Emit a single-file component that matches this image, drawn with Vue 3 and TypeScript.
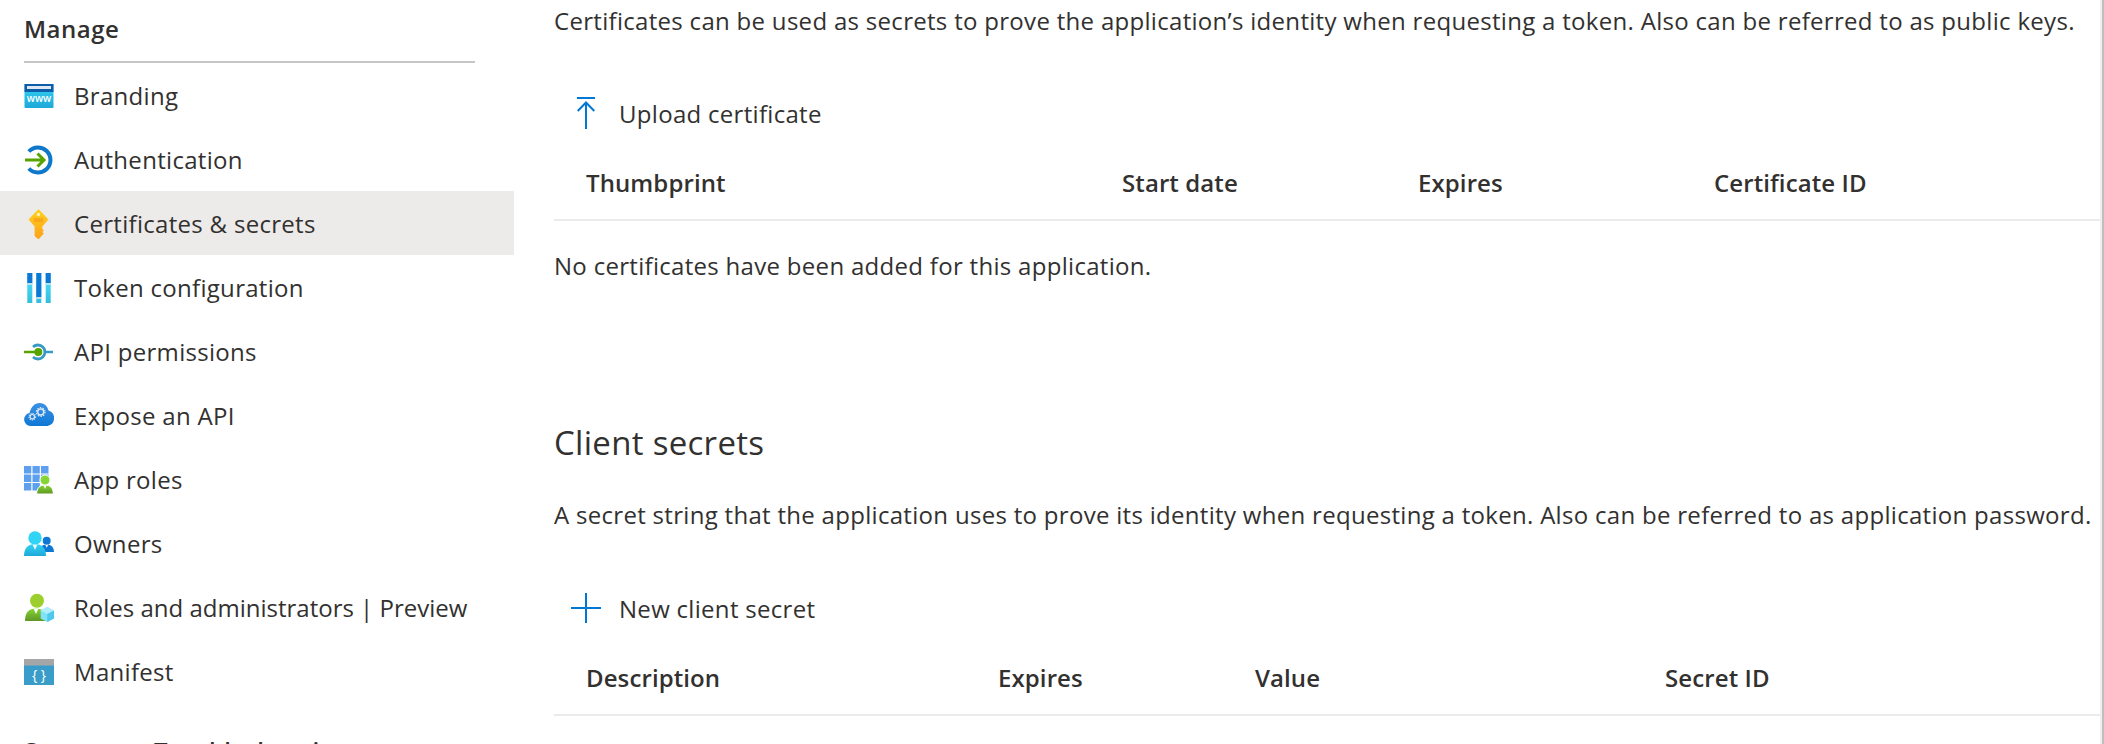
<script setup lang="ts">
const navItems = [
  { key: 'branding', label: 'Branding' },
  { key: 'auth', label: 'Authentication' },
  { key: 'certs', label: 'Certificates & secrets', active: true },
  { key: 'token', label: 'Token configuration' },
  { key: 'api', label: 'API permissions' },
  { key: 'expose', label: 'Expose an API' },
  { key: 'roles', label: 'App roles' },
  { key: 'owners', label: 'Owners' },
  { key: 'admins', label: 'Roles and administrators | Preview', tight: true },
  { key: 'manifest', label: 'Manifest' },
];

const certColumns = ['Thumbprint', 'Start date', 'Expires', 'Certificate ID'];
const secretColumns = ['Description', 'Expires', 'Value', 'Secret ID'];
</script>

<template>
  <div class="page">
    <aside class="sidebar">
      <h3 class="group-title">Manage</h3>
      <nav class="nav">
        <a
          v-for="item in navItems"
          :key="item.key"
          class="nav-item"
          :class="{ active: item.active }"
        >
          <span class="nav-icon">
            <svg width="30" height="30" viewBox="0 0 30 30">
              <defs>
                <linearGradient id="g-cyan" x1="0" y1="0" x2="0" y2="1">
                  <stop offset="0" stop-color="#32d4f5" />
                  <stop offset="1" stop-color="#1fa8d8" />
                </linearGradient>
                <linearGradient id="g-green" x1="0" y1="0" x2="0" y2="1">
                  <stop offset="0" stop-color="#86d633" />
                  <stop offset="1" stop-color="#5e9624" />
                </linearGradient>
                <linearGradient id="g-cloud" x1="0" y1="0" x2="0" y2="1">
                  <stop offset="0" stop-color="#3c91e5" />
                  <stop offset="1" stop-color="#0f78d4" />
                </linearGradient>
                <linearGradient id="g-key" x1="0" y1="0" x2="0" y2="1">
                  <stop offset="0" stop-color="#fed11a" />
                  <stop offset="1" stop-color="#fea11b" />
                </linearGradient>
                <linearGradient id="g-bar" x1="0" y1="0" x2="0" y2="1">
                  <stop offset="0" stop-color="#50e6ff" />
                  <stop offset="1" stop-color="#32bedd" />
                </linearGradient>
              </defs>
              <template v-if="item.key === 'branding'">
                <rect x="0.500" y="3" width="29" height="24" rx="1" fill="url(#g-cyan)" />
                <rect x="0.500" y="3" width="29" height="8" fill="#0f5ca8" />
                <rect x="3" y="5" width="24" height="3" fill="#dce9f4" />
                <text x="15" y="21" class="www">www</text>
              </template>
              <template v-else-if="item.key === 'auth'">
                <path d="M4.800 6.500A12.500 12.500 0 1 1 4.800 23.500" fill="none" stroke="#0f78c8" stroke-width="4" />
                <path d="M1 15h18M13.500 8.500l6.500 6.500-6.500 6.500" fill="none" stroke="#57a300" stroke-width="3" />
              </template>
              <template v-else-if="item.key === 'certs'">
                <path d="M14.500 0.500L24 10.500 18 17.500V20l1.500 1.500L18 23l1.500 1.500L18 26l-3.500 4L11 27V17.500L5 10.500z" fill="url(#g-key)" stroke="url(#g-key)" stroke-width="0.800" stroke-linejoin="round" />
                <circle cx="14.500" cy="5.500" r="1.700" fill="#fff3c4" />
                <path d="M10 10h9M10 12h9" stroke="#f78d1e" stroke-width="1" />
              </template>
              <template v-else-if="item.key === 'token'">
                <rect x="3.300" y="0" width="5" height="30" fill="url(#g-bar)" />
                <rect x="12.300" y="0" width="5" height="30" fill="url(#g-bar)" />
                <rect x="21.700" y="0" width="5" height="30" fill="url(#g-bar)" />
                <rect x="3.300" y="0" width="5" height="10" fill="#0f78d4" />
                <rect x="12.300" y="0" width="5" height="24" fill="#0f78d4" />
                <rect x="21.700" y="0" width="5" height="10" fill="#0f78d4" />
                <path d="M3.300 11h5M12.300 25h5M21.700 11h5" stroke="#dce6ec" stroke-width="1.500" />
              </template>
              <template v-else-if="item.key === 'api'">
                <path d="M9 10A7 7 0 1 1 9 20" fill="none" stroke="#3999c6" stroke-width="2.800" />
                <path d="M20.500 15H29" stroke="#3999c6" stroke-width="2.500" />
                <path d="M0 15h14" stroke="#57a300" stroke-width="2.500" />
                <circle cx="14.300" cy="15" r="4" fill="#57a300" />
              </template>
              <template v-else-if="item.key === 'expose'">
                <path d="M6.500 25a6.500 6.500 0 0 1-1-12.900C6.800 6 10.800 2 15.500 2c4.700 0 8 3 9 7.500A8 8 0 0 1 23.500 25z" fill="url(#g-cloud)" />
                <circle cx="16.700" cy="11" r="3" fill="none" stroke="#dbe9f7" stroke-width="1.400" />
                <circle cx="16.700" cy="11" r="4.300" fill="none" stroke="#dbe9f7" stroke-width="1.300" stroke-dasharray="1.400 1.300" />
                <circle cx="8.300" cy="15.700" r="2.200" fill="none" stroke="#dbe9f7" stroke-width="1.200" />
                <circle cx="8.300" cy="15.700" r="3.300" fill="none" stroke="#dbe9f7" stroke-width="1.100" stroke-dasharray="1.200 1" />
              </template>
              <template v-else-if="item.key === 'roles'">
                <path d="M0 1h7.300v7.500H0zM8.500 1h7.300v7.500H8.500zM17 1h7.500v7.500H17zM0 9.500h7.300V17H0zM8.500 9.500h7.300V17H8.500zM17 9.500h7.500V17H17zM0 18h7.300v7.500H0zM8.500 18h7.300v7.500H8.500z" fill="#5ea0ef" />
                <path d="M12.700 29c0-6 3-9 8.300-9s8.300 3 8.300 9z" fill="url(#g-green)" stroke="#fff" stroke-width="1" />
                <circle cx="21" cy="15" r="5" fill="#86d633" stroke="#fff" stroke-width="1" />
                <path d="M19.500 20.500h3l-1.500 3.500z" fill="#fff" />
              </template>
              <template v-else-if="item.key === 'owners'">
                <circle cx="22.700" cy="11.700" r="4" fill="#0f78d4" />
                <path d="M15 23c0-4.500 3-7.500 7.700-7.500S30 18.500 30 23z" fill="#0f78d4" />
                <path d="M21.200 15.800h3l-1.500 3z" fill="#fff" />
                <circle cx="11" cy="9" r="6.700" fill="#32d4f5" />
                <path d="M0 27c0-8 4-12 11-12s11 4 11 12z" fill="url(#g-cyan)" />
                <path d="M8.500 15.500h5L11 21z" fill="#e8f8fd" />
              </template>
              <template v-else-if="item.key === 'admins'">
                <circle cx="13" cy="7.700" r="7" fill="#9ccf2e" />
                <path d="M1 28c0-9 4-12.500 11-12.500S22.700 19 22.700 28z" fill="url(#g-green)" />
                <path d="M9.500 15.500h5L12 21z" fill="#fff" />
                <path d="M23.300 14l6.700 3.500v8l-6.700 3.500-6.600-3.500v-8z" fill="#7fe3f7" />
                <path d="M16.700 17.500l6.600 3.500 6.700-3.500-6.700-3.500z" fill="#b4eefb" />
                <path d="M23.300 21v8l6.700-3.500v-8z" fill="#50c8ec" />
              </template>
              <template v-else-if="item.key === 'manifest'">
                <rect x="0" y="2" width="30" height="26" fill="#3a9cc9" />
                <rect x="0" y="2" width="30" height="6.500" fill="#a4a6a8" />
                <text x="15" y="22.500" class="braces">{ }</text>
              </template>
            </svg>
          </span>
          <span class="nav-label" :class="{ tight: item.tight }">{{ item.label }}</span>
        </a>
      </nav>
      <h3 class="group-title next">Support + Troubleshooting</h3>
    </aside>

    <main class="content">
      <p class="hint first">
        Certificates can be used as secrets to prove the application’s identity when requesting a token. Also can be referred to as public keys.
      </p>
      <button class="command">
        <span class="cmd-box">
          <svg width="18" height="32" viewBox="0 0 18 32">
            <path d="M0 1h18M9 6v26M0.700 14L9 5.500 17.300 14" fill="none" stroke="#0078d4" stroke-width="2" />
          </svg>
        </span>
        Upload certificate
      </button>
      <div class="table-head certs">
        <span v-for="col in certColumns" :key="col">{{ col }}</span>
      </div>
      <p class="empty">No certificates have been added for this application.</p>

      <h2 class="section-title">Client secrets</h2>
      <p class="hint">
        A secret string that the application uses to prove its identity when requesting a token. Also can be referred to as application password.
      </p>
      <button class="command">
        <span class="cmd-box">
          <svg width="30" height="30" viewBox="0 0 30 30">
            <path d="M0 15h30M15 0v30" fill="none" stroke="#0078d4" stroke-width="2" />
          </svg>
        </span>
        New client secret
      </button>
      <div class="table-head secrets">
        <span v-for="col in secretColumns" :key="col">{{ col }}</span>
      </div>
    </main>
  </div>
</template>

<style>
html,
body {
  margin: 0;
  background: #fff;
}
</style>

<style scoped>
.page {
  display: grid;
  grid-template-columns: 514px 1fr;
  box-sizing: border-box;
  height: 744px;
  overflow: hidden;
  border-right: 2px solid #bebebe;
  font-family: "Open Sans", "Noto Sans", sans-serif;
  font-size: 24px;
  letter-spacing: 0.3px;
  color: #323130;
}

.group-title {
  margin: 0 39px 0 24px;
  height: 63px;
  box-sizing: border-box;
  padding-top: 12px;
  line-height: 34px;
  font-size: 24px;
  font-weight: 600;
  letter-spacing: 0.5px;
  border-bottom: 2px solid #c8c6c4;
}

.group-title.next {
  border: 0;
  padding-top: 0;
  margin-top: 31px;
  word-spacing: 4px;
  letter-spacing: 0.3px;
}

.nav {
  display: flex;
  flex-direction: column;
}

.nav-item {
  display: flex;
  align-items: center;
  box-sizing: border-box;
  height: 64px;
  padding: 2px 0 0 24px;
}

.nav-item.active {
  background: #edebe9;
}

.nav-icon {
  display: flex;
  width: 50px;
}

.nav-label {
  margin-bottom: 2px;
}

.nav-label.tight {
  letter-spacing: 0;
}

.www {
  font-size: 10px;
  font-weight: 600;
  fill: #fff;
  text-anchor: middle;
  letter-spacing: 0;
}

.braces {
  font-size: 14px;
  fill: #fff;
  text-anchor: middle;
  letter-spacing: 0;
}

.content {
  padding-left: 40px;
  min-width: 0;
  border-right: 2px solid #efefef;
}

.hint {
  margin: 0;
  line-height: 34px;
  white-space: nowrap;
}

.hint.first {
  padding-top: 4px;
}

.command {
  display: flex;
  align-items: center;
  gap: 17px;
  height: 60px;
  margin-top: 45px;
  padding: 0 0 0 16px;
  border: 0;
  background: none;
  font: inherit;
  letter-spacing: inherit;
  color: inherit;
}

.cmd-box {
  display: flex;
  justify-content: center;
  width: 32px;
  flex: none;
}

.table-head {
  display: grid;
  align-items: center;
  height: 78px;
  padding: 2px 0 0 32px;
  font-weight: 600;
  letter-spacing: 0.1px;
  border-bottom: 2px solid #edebe9;
  box-sizing: border-box;
}

.table-head.certs {
  grid-template-columns: 536px 296px 296px 1fr;
}

.table-head.secrets {
  grid-template-columns: 412px 257px 410px 1fr;
}

.empty {
  margin: 28px 0 0;
  line-height: 34px;
}

.section-title {
  margin: 138px 0 0;
  font-size: 33px;
  font-weight: 400;
  line-height: 44px;
}

.section-title + .hint {
  margin-top: 33px;
}

.section-title + .hint + .command {
  margin-top: 46px;
}
</style>
